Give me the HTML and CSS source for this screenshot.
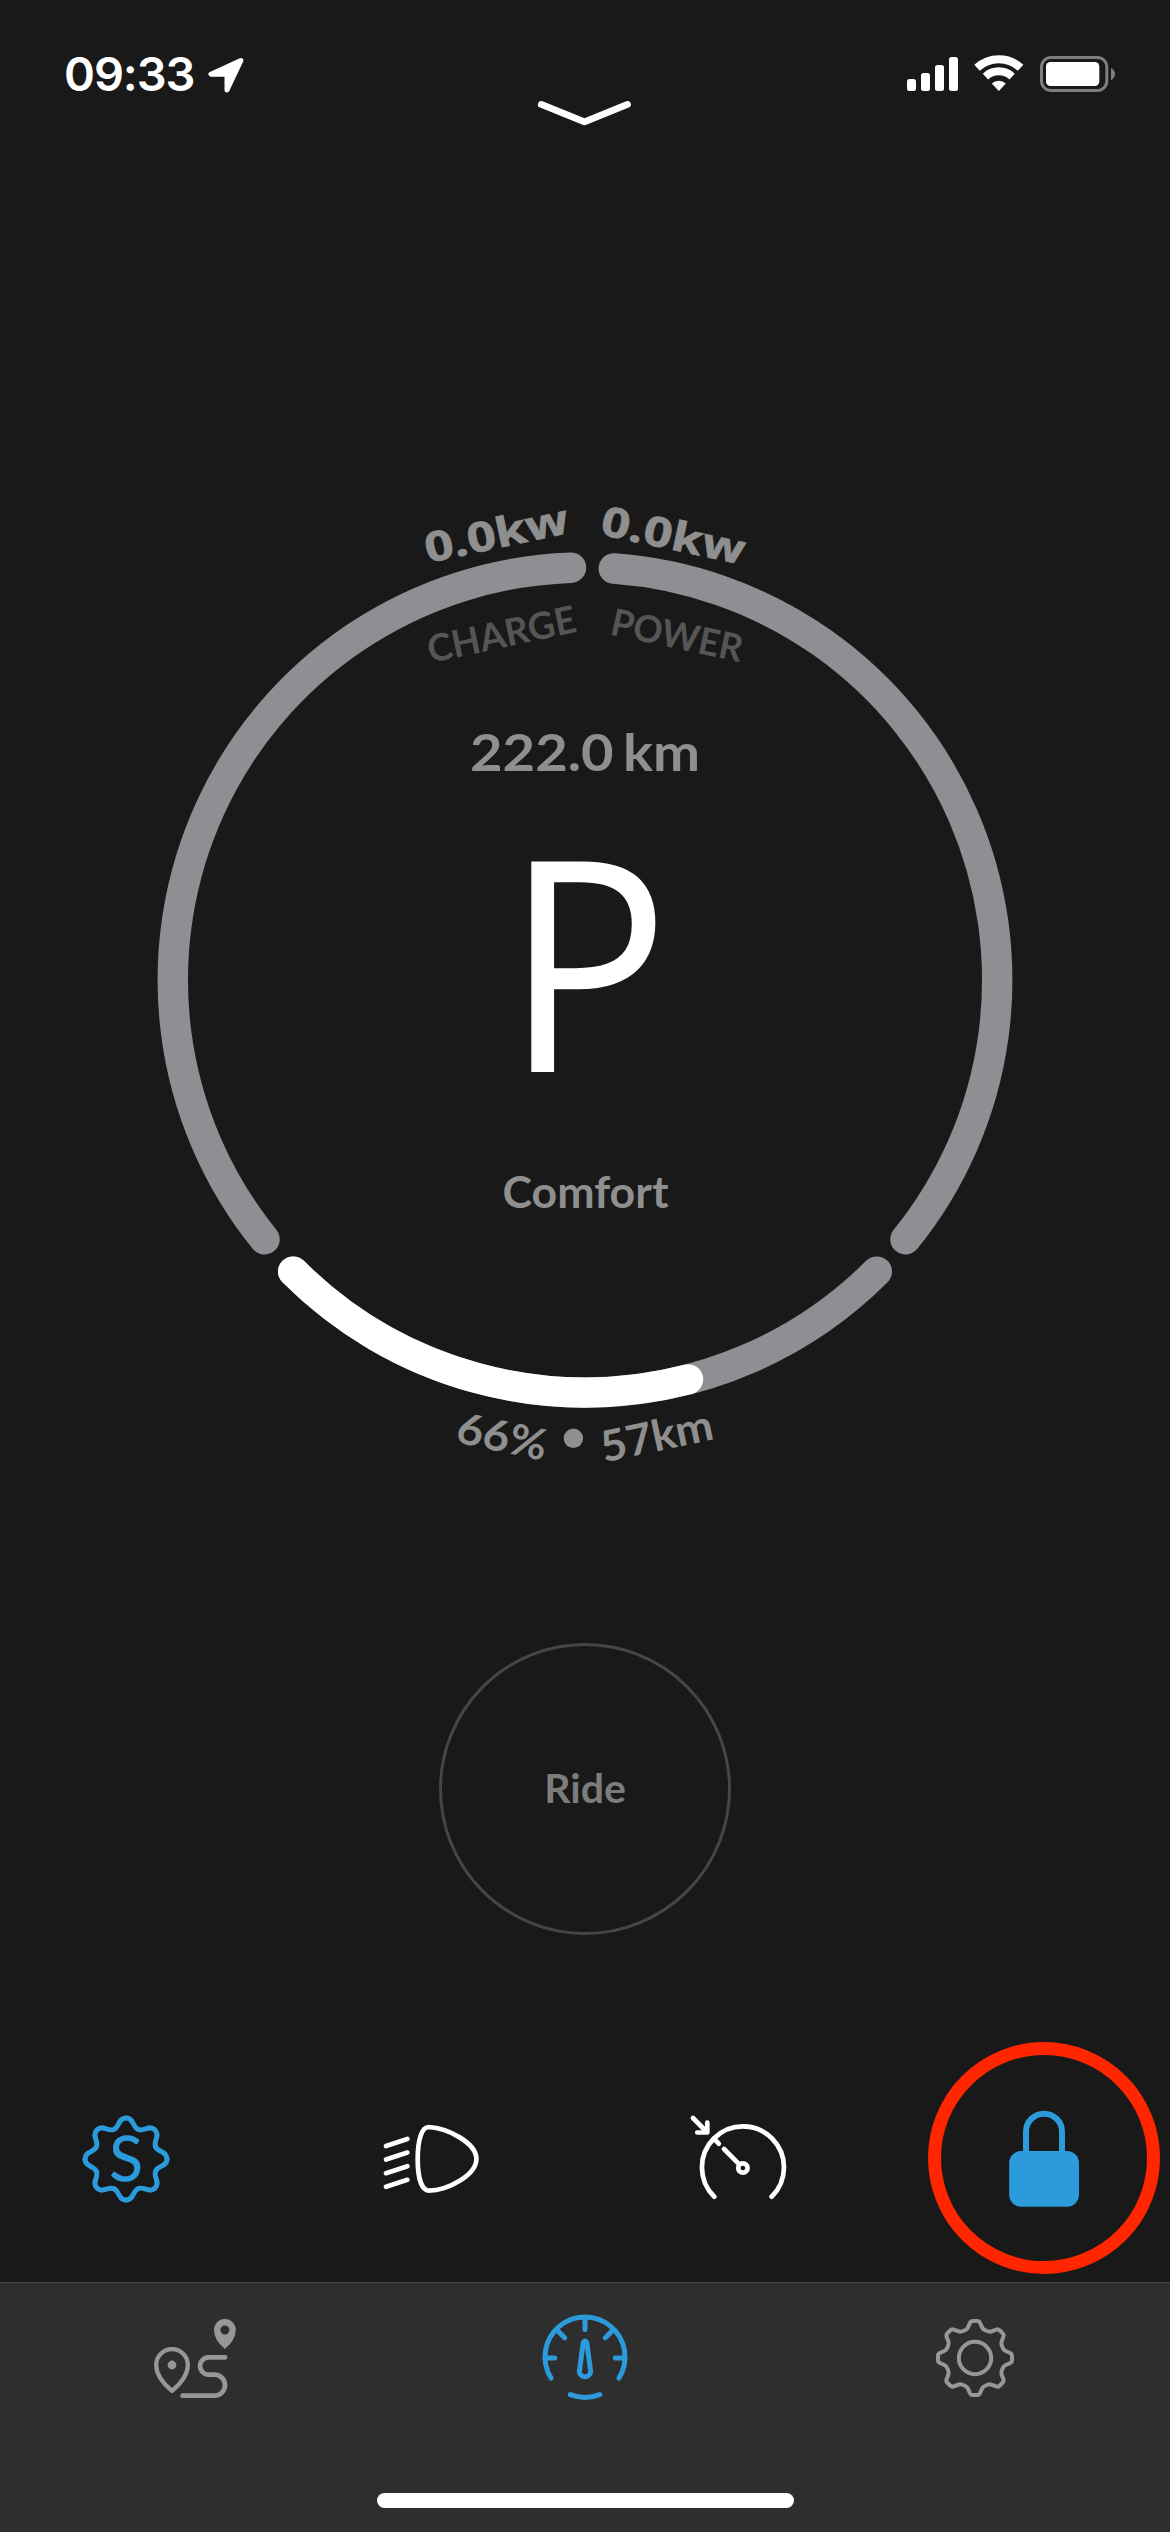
FILE: index.html
```html
<!DOCTYPE html>
<html lang="en">
<head>
<meta charset="utf-8">
<title>Ride dashboard</title>
<link rel="stylesheet" href="styles.css">
</head>
<body>
<main class="screen">
  <header class="status">
    <div class="status-left">
      <span class="time">09:33</span>
      <svg class="location" width="42" height="40" viewBox="205 55 42 40"><path d="M240.800 60.600 L211 74.200 H227 V90 Z"/></svg>
    </div>
    <svg class="chevron" width="100" height="32" viewBox="535 97 100 32"><path d="M541.300 104.400 L584.500 121.800 L627.500 104.400"/></svg>
    <div class="status-right">
      <svg width="52" height="40" viewBox="907 54 52 40" class="solid"><rect x="907" y="79" width="9" height="12" rx="2.500"/><rect x="921" y="73" width="9" height="18" rx="2.500"/><rect x="935" y="65" width="9" height="26" rx="2.500"/><rect x="949" y="57" width="9" height="34" rx="2.500"/></svg>
      <svg width="52" height="40" viewBox="973 54 52 40"><g class="wifi"><path d="M977 67.800 A32 32 0 0 1 1020.600 67.800"/><path d="M985.500 76.600 A19.500 19.500 0 0 1 1012.100 76.600"/></g><path class="solid" d="M998.800 91 L991.800 83.600 A10 10 0 0 1 1005.800 83.600 Z"/></svg>
      <svg width="77" height="40" viewBox="1039 54 77 40"><rect class="cell" x="1041.500" y="57.500" width="65.300" height="33" rx="9.500"/><rect class="solid" x="1046" y="62" width="53.300" height="24" rx="4.500"/><path class="nub" d="M1111 68 Q1115 70 1115 74 T1111 80 Z"/></svg>
    </div>
  </header>

  <section class="gauge">
    <svg width="1170" height="1060" viewBox="0 440 1170 1060">
      <g class="arc">
        <path d="M571 567.700 A412.500 412.500 0 0 0 264.500 1239.300"/>
        <path d="M613.800 568.500 A412.500 412.500 0 0 1 905.500 1239.300"/>
        <path d="M293.200 1271.600 A412.500 412.500 0 0 0 876.800 1271.600"/>
        <path class="charge-level" d="M293.200 1271.600 A412.500 412.500 0 0 0 688 1379.400"/>
      </g>
      <text class="kw" transform="translate(428 563) rotate(-12)" textLength="146" lengthAdjust="spacingAndGlyphs">0.0kw</text>
      <text class="kw" transform="translate(599 534.300) rotate(12)" textLength="146" lengthAdjust="spacingAndGlyphs">0.0kw</text>
      <text class="caption" transform="translate(430.500 663) rotate(-12)" textLength="151" lengthAdjust="spacingAndGlyphs">CHARGE</text>
      <text class="caption" transform="translate(609 634.400) rotate(12)" textLength="133.500" lengthAdjust="spacingAndGlyphs">POWER</text>
      <text class="distance" x="470" y="771" textLength="230" lengthAdjust="spacingAndGlyphs">222.0 km</text>
      <text class="gear" transform="translate(504.500 1072) scale(.93 1)">P</text>
      <text class="label" x="502.500" y="1207.800" textLength="166" lengthAdjust="spacingAndGlyphs">Comfort</text>
      <text class="range" transform="translate(454.500 1442) rotate(12)" textLength="91" lengthAdjust="spacingAndGlyphs">66%</text>
      <circle class="dot" cx="573.400" cy="1438.300" r="9.700"/>
      <text class="range" transform="translate(604 1462.500) rotate(-12)" textLength="114" lengthAdjust="spacingAndGlyphs">57km</text>
    </svg>
  </section>

  <section class="ride-row">
    <button class="ride" type="button">Ride</button>
  </section>

  <nav class="quick">
    <svg width="100" height="100" viewBox="-50 -50 100 100" class="icon blue">
      <defs><path id="lobe" d="M0 -41 C8 -41 6.200 -32.100 12.200 -29.600 S23.300 -34.700 29 -29"/></defs>
      <use href="#lobe"/><use href="#lobe" transform="rotate(45)"/><use href="#lobe" transform="rotate(90)"/><use href="#lobe" transform="rotate(135)"/><use href="#lobe" transform="rotate(180)"/><use href="#lobe" transform="rotate(225)"/><use href="#lobe" transform="rotate(270)"/><use href="#lobe" transform="rotate(315)"/>
      <text class="mode" x="0" y="22.300">S</text>
    </svg>
    <svg width="110" height="100" viewBox="375.300 2109 110 100" class="icon white">
      <path d="M429 2127 C448 2128 476.700 2143 476.700 2159 S448 2190.700 429 2190.700 C422 2190 418 2178 418 2159 S422 2127 429 2127 Z"/>
      <path d="M386.300 2146 L407.700 2139 M386.300 2159.600 L407.700 2152.600 M386.300 2173.200 L407.700 2166.200 M386.300 2186.800 L407.700 2179.800"/>
    </svg>
    <svg width="110" height="100" viewBox="684.700 2109 110 100" class="icon white">
      <path d="M714 2196.700 A41 41 0 1 1 771.300 2196.700"/>
      <circle cx="742.600" cy="2168" r="4.700"/>
      <path d="M723.700 2149 L739 2164.300 M714 2139 L718.500 2143.700 M692.700 2118 L706.500 2132 M707 2122.500 V2132.500 H697"/>
    </svg>
    <div class="lock">
      <svg width="100" height="110" viewBox="994 2104 100 110" class="icon"><rect class="lock-body" x="1009.200" y="2151" width="69.800" height="55.800" rx="12"/><path class="shackle" d="M1026 2154 V2131.700 A18 18 0 0 1 1062 2131.700 V2154"/></svg>
      <span class="highlight"></span>
    </div>
  </nav>

  <footer class="tabs">
    <div class="tab-row">
      <svg width="100" height="100" viewBox="145 2308 100 100" class="icon tab">
        <path class="pin" d="M172 2390.800 C165 2385 156.200 2375 156.200 2365 A15.800 15.800 0 0 1 187.800 2365 C187.800 2375 179 2385 172 2390.800 Z"/>
        <circle class="fill" cx="172" cy="2365" r="4.400"/>
        <path class="fill" fill-rule="evenodd" d="M224.900 2349 Q214 2340 214 2330 A10.900 10.900 0 0 1 235.800 2330 Q235.800 2340 224.900 2349 Z M224.900 2325.500 A4.500 4.500 0 1 0 224.900 2334.500 A4.500 4.500 0 1 0 224.900 2325.500 Z"/>
        <path d="M225.200 2357.300 H208.700 A8.700 8.700 0 0 0 208.700 2374.700 H214.500 A10.500 10.500 0 0 1 214.500 2395.700 H182.600"/>
      </svg>
      <svg width="100" height="100" viewBox="535 2308 100 100" class="icon blue">
        <path d="M551 2378 A40 40 0 1 1 619 2378 M547 2358 H554.700 M623 2358 H615.300 M585 2319 V2329.500 M557.500 2330.500 L564.700 2337.800 M612.500 2330.500 L605.300 2337.800"/>
        <path d="M570.300 2394.700 Q585 2400.200 599.700 2394.700"/>
        <path d="M583.200 2342.500 Q585 2339.500 586.800 2342.500 L590.700 2372 A5.800 5.800 0 0 1 579.300 2372 Z"/>
      </svg>
      <svg width="100" height="100" viewBox="-50 -50 100 100" class="icon tab thin">
        <defs><path id="tooth" d="M0 -37 H2.200 Q4.200 -37 5 -35.200 L7.300 -30.200 C8.300 -28 14 -25.700 16.200 -26.500 L21.300 -28.400 Q23.200 -29.100 24.600 -27.700 L26.200 -26.200"/></defs>
        <use href="#tooth"/><use href="#tooth" transform="rotate(45)"/><use href="#tooth" transform="rotate(90)"/><use href="#tooth" transform="rotate(135)"/><use href="#tooth" transform="rotate(180)"/><use href="#tooth" transform="rotate(225)"/><use href="#tooth" transform="rotate(270)"/><use href="#tooth" transform="rotate(315)"/>
        <circle r="16.200"/>
      </svg>
    </div>
    <div class="home"></div>
  </footer>
</main>
</body>
</html>
```

FILE: styles.css
```css
* { box-sizing: border-box; }
body { margin: 0; background: #191919; }
svg { display: block; }
.screen {
  display: flex;
  flex-direction: column;
  width: 1170px;
  height: 2532px;
  overflow: hidden;
  background: #191919;
  font-family: Lato, "Open Sans", sans-serif;
}

/* Status bar */
.status {
  display: grid;
  grid-template-columns: 1fr 100px 1fr;
  height: 440px;
  align-items: start;
}
.status-left { display: flex; padding: 44px 0 0 64px; }
.location { margin-top: 11px; }
.status-right { display: flex; justify-content: flex-end; padding: 54px 54px 0 0; gap: 14px; }
.chevron { margin-top: 97px; fill: none; stroke: #fff; stroke-width: 6.800; stroke-linecap: round; stroke-linejoin: round; }
.time { width: 141px; font: 600 47px/60px Inter, sans-serif; letter-spacing: -1.100px; color: #fff; }
.location path { fill: #fff; stroke: #fff; stroke-width: 5; stroke-linejoin: round; }
.solid { fill: #fff; }
.wifi { fill: none; stroke: #fff; stroke-width: 8; }
.cell { fill: none; stroke: #7e7e7e; stroke-width: 3; }
.nub { fill: #7e7e7e; }

/* Gauge */
.gauge { height: 1060px; }
.arc { fill: none; stroke: #8f8e93; stroke-width: 30.400; stroke-linecap: round; }
.charge-level { stroke: #fff; }
.kw { font: 700 41px "Open Sans", sans-serif; fill: #8f8f8f; stroke: #8f8f8f; stroke-width: .7; }
.caption { font-size: 37.500px; font-weight: 700; fill: #555556; }
.distance { font-size: 52px; font-weight: 700; fill: #8f8f8f; word-spacing: -4px; }
.gear { font: 400 295px "Open Sans", sans-serif; fill: #fff; }
.label { font-size: 43px; font-weight: 700; fill: #8f8f8f; }
.range { font-size: 43px; font-weight: 700; fill: #8f8f8f; }
.dot { fill: #8f8f8f; }

/* Ride button */
.ride-row { display: flex; justify-content: center; padding-top: 143px; height: 609px; }
.ride {
  width: 292px;
  height: 292px;
  padding: 0 0 3px;
  border: 3px solid #464646;
  border-radius: 50%;
  background: none;
  color: #7c7c7c;
  font: 700 41px Lato, sans-serif;
}

/* Quick actions */
.quick { display: flex; height: 173px; padding: 0 76px; justify-content: space-between; align-items: flex-start; }
.icon { fill: none; stroke-width: 4.700; stroke-linecap: round; stroke-linejoin: round; }
.blue { stroke: #2b9bdb; stroke-width: 5; }
.white { stroke: #fff; }
.mode { font-size: 62px; font-weight: 400; fill: #2b9bdb; stroke: #2b9bdb; stroke-width: .5; text-anchor: middle; }
.lock { position: relative; margin-top: -5px; }
.lock-body { fill: #2b9bdb; }
.shackle { stroke: #2b9bdb; stroke-width: 6; stroke-linecap: butt; }
.highlight {
  position: absolute;
  left: -66px;
  top: -62px;
  width: 232px;
  height: 232px;
  border: 13px solid #ff2600;
  border-radius: 50%;
}

/* Tab bar */
.tabs {
  display: flex;
  flex-direction: column;
  justify-content: space-between;
  align-items: center;
  height: 250px;
  padding: 25px 0 24px;
  border-top: 1px solid #444;
  background: #2e2e2e;
}
.tab-row { display: flex; justify-content: space-between; width: 100%; padding: 0 145px; }
.tab { stroke: #979797; }
.thin { stroke-width: 4; }
.pin { stroke-width: 4.300; }
.fill { fill: #979797; stroke: none; }
.home { width: 417px; height: 15px; border-radius: 8px; background: #fff; }
```
